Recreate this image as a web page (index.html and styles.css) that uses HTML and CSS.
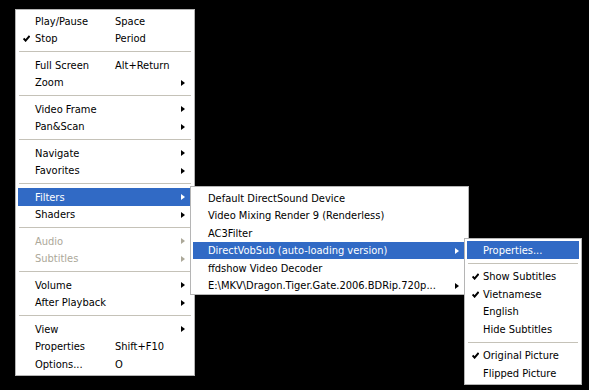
FILE: index.html
```html
<!DOCTYPE html>
<html lang="en">
<head>
	<meta charset="UTF-8" />
	<title>Player context menu</title>
	<link rel="stylesheet" href="styles.css">
</head>
<body>
	<div class="desk">

		<ul class="menu menu-main">
			<li class="item"><span class="check"></span><span class="label">Play/Pause</span><span class="key">Space</span></li>
			<li class="item"><span class="check on"><svg viewBox="0 0 7 7"><path d="M0.6 3.4 L2.6 5.6 L6.6 1" /></svg></span><span class="label">Stop</span><span class="key">Period</span></li>
			<li class="sep"></li>
			<li class="item"><span class="check"></span><span class="label">Full Screen</span><span class="key">Alt+Return</span></li>
			<li class="item sub"><span class="check"></span><span class="label">Zoom</span><span class="key"></span><span class="arrow"></span></li>
			<li class="sep"></li>
			<li class="item sub"><span class="check"></span><span class="label">Video Frame</span><span class="key"></span><span class="arrow"></span></li>
			<li class="item sub"><span class="check"></span><span class="label">Pan&amp;Scan</span><span class="key"></span><span class="arrow"></span></li>
			<li class="sep"></li>
			<li class="item sub"><span class="check"></span><span class="label">Navigate</span><span class="key"></span><span class="arrow"></span></li>
			<li class="item sub"><span class="check"></span><span class="label">Favorites</span><span class="key"></span><span class="arrow"></span></li>
			<li class="sep"></li>
			<li class="item sub active"><span class="check"></span><span class="label">Filters</span><span class="key"></span><span class="arrow"></span></li>
			<li class="item sub"><span class="check"></span><span class="label">Shaders</span><span class="key"></span><span class="arrow"></span></li>
			<li class="sep"></li>
			<li class="item sub disabled"><span class="check"></span><span class="label">Audio</span><span class="key"></span><span class="arrow"></span></li>
			<li class="item sub disabled"><span class="check"></span><span class="label">Subtitles</span><span class="key"></span><span class="arrow"></span></li>
			<li class="sep"></li>
			<li class="item sub"><span class="check"></span><span class="label">Volume</span><span class="key"></span><span class="arrow"></span></li>
			<li class="item sub"><span class="check"></span><span class="label">After Playback</span><span class="key"></span><span class="arrow"></span></li>
			<li class="sep"></li>
			<li class="item sub"><span class="check"></span><span class="label">View</span><span class="key"></span><span class="arrow"></span></li>
			<li class="item"><span class="check"></span><span class="label">Properties</span><span class="key">Shift+F10</span></li>
			<li class="item"><span class="check"></span><span class="label">Options...</span><span class="key">O</span></li>
		</ul>

		<ul class="menu menu-filters">
			<li class="item"><span class="check"></span><span class="label">Default DirectSound Device</span></li>
			<li class="item"><span class="check"></span><span class="label">Video Mixing Render 9 (Renderless)</span></li>
			<li class="item"><span class="check"></span><span class="label">AC3Filter</span></li>
			<li class="item sub active"><span class="check"></span><span class="label">DirectVobSub (auto-loading version)</span><span class="arrow"></span></li>
			<li class="item"><span class="check"></span><span class="label">ffdshow Video Decoder</span></li>
			<li class="item sub"><span class="check"></span><span class="label">E:\MKV\Dragon.Tiger.Gate.2006.BDRip.720p...</span><span class="arrow"></span></li>
		</ul>

		<ul class="menu menu-vobsub">
			<li class="item active"><span class="check"></span><span class="label">Properties...</span></li>
			<li class="sep"></li>
			<li class="item"><span class="check on"><svg viewBox="0 0 7 7"><path d="M0.6 3.4 L2.6 5.6 L6.6 1" /></svg></span><span class="label">Show Subtitles</span></li>
			<li class="item"><span class="check on"><svg viewBox="0 0 7 7"><path d="M0.6 3.4 L2.6 5.6 L6.6 1" /></svg></span><span class="label">Vietnamese</span></li>
			<li class="item"><span class="check"></span><span class="label">English</span></li>
			<li class="item"><span class="check"></span><span class="label">Hide Subtitles</span></li>
			<li class="sep"></li>
			<li class="item"><span class="check on"><svg viewBox="0 0 7 7"><path d="M0.6 3.4 L2.6 5.6 L6.6 1" /></svg></span><span class="label">Original Picture</span></li>
			<li class="item"><span class="check"></span><span class="label">Flipped Picture</span></li>
		</ul>

	</div>
</body>
</html>
```

FILE: styles.css
```css
html {
	background: #000;
}

body {
	margin: 0;
	font-family: "DejaVu Sans Condensed", "Liberation Sans", Arial, sans-serif;
	font-size: 11px;
	color: #000;
}

.desk {
	position: relative;
	width: 589px;
	height: 390px;
	overflow: hidden;
}

/* popup menus, stacked like real windows */
.menu {
	position: absolute;
	box-sizing: border-box;
	margin: 0;
	padding: 2px;
	list-style: none;
	background: #fff;
	border: 1px solid #b5b5b5;
}

.menu-main {
	left: 15px;
	top: 9px;
	width: 180px;
	height: 367px;
}

.menu-filters {
	left: 190px;
	top: 186px;
	width: 279px;
	height: 109px;
}

.menu-vobsub {
	left: 464px;
	top: 238px;
	width: 118px;
	height: 147px;
}

.item {
	display: flex;
	align-items: center;
	box-sizing: border-box;
	height: 17.5px;
	padding-top: 1px;
	white-space: nowrap;
}

.check {
	flex: none;
	display: flex;
	align-items: center;
	justify-content: center;
	width: 17px;
}

.menu-filters .check {
	width: 15px;
}

.menu-vobsub .check {
	width: 16px;
}

.check svg {
	width: 7px;
	height: 7px;
	fill: none;
	stroke: #000;
	stroke-width: 2;
}

.label {
	flex: 1;
}

.menu-main .label {
	flex: none;
	width: 80px;
}

.key {
	flex: 1;
}

.arrow {
	flex: none;
	width: 0;
	height: 0;
	margin: 0 7px 0 4px;
	border-top: 3.5px solid transparent;
	border-bottom: 3.5px solid transparent;
	border-left: 4px solid #000;
}

.active {
	background: #316ac5;
	color: #fff;
}

.active .arrow {
	border-left-color: #fff;
}

.active .check svg {
	stroke: #fff;
}

.disabled {
	color: #aca899;
}

.disabled .arrow {
	border-left-color: #aca899;
}

.sep {
	height: 1px;
	margin: 4px 1px 4px 1px;
	background: #c5c2b8;
}
```
